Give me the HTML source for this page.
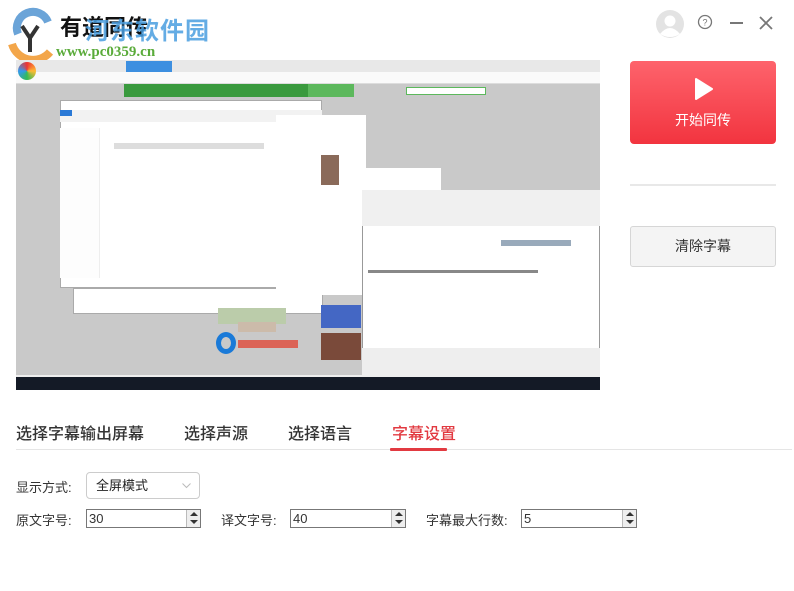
<!DOCTYPE html>
<html><head><meta charset="utf-8"><style>
*{margin:0;padding:0;box-sizing:border-box}
body{width:794px;height:591px;background:#fff;font-family:"Liberation Sans","Noto Sans CJK SC",sans-serif;position:relative;overflow:hidden;color:#333}
.a{position:absolute}
.tab{position:absolute;top:420px;font-size:16px;color:#333;font-weight:500}
.lbl{position:absolute;font-size:13px;color:#333}
.spin{position:absolute;height:19px;border:1px solid #777;background:#fff;font-size:13px;padding-left:2px;line-height:17px}
.spin .b{position:absolute;right:0;top:0;width:14px;height:17px;border-left:1px solid #bbb;background:#eee}
.spin .b:before{content:"";position:absolute;left:3px;top:2px;border:4px solid transparent;border-bottom:4px solid #333;border-top:0}
.spin .b:after{content:"";position:absolute;left:3px;top:10px;border:4px solid transparent;border-top:4px solid #333;border-bottom:0}
</style></head><body>
<svg class="a" style="left:4px;top:4px" width="60" height="58" viewBox="0 0 60 58">
<path d="M14 30 A16 16 0 0 1 44 18" stroke="#6ba4d8" stroke-width="8" fill="none"/>
<path d="M8 40 A22 22 0 0 0 46 48" stroke="#f3a64a" stroke-width="8" fill="none"/>
<path d="M18 22 l8 12 l8-12 M26 34 v14" stroke="#333" stroke-width="4" fill="none"/>
</svg>
<div class="a" style="left:60px;top:10px;font-size:22px;font-weight:bold;color:#111">有道同传</div>
<div class="a" style="left:85px;top:11px;font-size:24px;font-weight:bold;color:#4a9ee0;opacity:.85;letter-spacing:1px">河东软件园</div>
<div class="a" style="left:56px;top:44px;font-size:15px;font-weight:bold;color:#5aab3a;font-family:'Liberation Serif',serif">www.pc0359.cn</div>
<svg class="a" style="left:655px;top:9px" width="30" height="30" viewBox="0 0 30 30"><circle cx="15" cy="15" r="14" fill="#e3e3e3"/><circle cx="15" cy="12" r="5.5" fill="#fff"/><path d="M5 25 Q15 13 25 25 Q15 31 5 25Z" fill="#fff"/></svg>
<svg class="a" style="left:697px;top:14px" width="16" height="16" viewBox="0 0 16 16"><circle cx="8" cy="8" r="6.5" stroke="#777" stroke-width="1.3" fill="none"/><text x="8" y="11.5" font-size="9" text-anchor="middle" fill="#777" font-family="Liberation Sans">?</text></svg>
<div class="a" style="left:730px;top:22px;width:13px;height:2px;background:#777"></div>
<svg class="a" style="left:759px;top:16px" width="14" height="14"><path d="M1 1L13 13M13 1L1 13" stroke="#777" stroke-width="1.8"/></svg>
<div class="a" style="left:16px;top:60px;width:584px;height:330px;background:#c9c9c9;overflow:hidden">
 <div class="a" style="left:0;top:0;width:584px;height:12px;background:#e8e8e8"></div>
 <div class="a" style="left:110px;top:1px;width:46px;height:11px;background:#3d8fe0"></div>
 <div class="a" style="left:0;top:12px;width:584px;height:12px;background:#fafafa;border-bottom:1px solid #ddd"></div>
 <div class="a" style="left:2px;top:2px;width:18px;height:18px;border-radius:50%;background:conic-gradient(#e33,#fb3,#3b5,#39e,#e33)"></div>
 <div class="a" style="left:108px;top:24px;width:230px;height:13px;background:#3a9a3e"></div>
 <div class="a" style="left:292px;top:24px;width:46px;height:13px;background:#5cb85c"></div>
 <div class="a" style="left:390px;top:27px;width:80px;height:8px;background:#fff;border:1px solid #5cb85c"></div>
 <div class="a" style="left:44px;top:40px;width:262px;height:188px;background:#fff;border:1px solid #aaa"></div>
 <div class="a" style="left:44px;top:50px;width:262px;height:12px;background:#f2f2f2"></div>
 <div class="a" style="left:44px;top:50px;width:12px;height:6px;background:#2a79d6"></div>
 <div class="a" style="left:44px;top:68px;width:40px;height:150px;background:#fdfdfd;border-right:1px solid #eee"></div>
 <div class="a" style="left:98px;top:83px;width:150px;height:6px;background:#ddd"></div>
 <div class="a" style="left:57px;top:228px;width:250px;height:26px;background:#fff;border:1px solid #aaa"></div>
 <div class="a" style="left:260px;top:55px;width:90px;height:180px;background:#fff"></div>
 <div class="a" style="left:305px;top:95px;width:18px;height:30px;background:#8a6a5a"></div>
 <div class="a" style="left:330px;top:108px;width:95px;height:30px;background:#fff"></div>
 <div class="a" style="left:202px;top:248px;width:68px;height:16px;background:#bca"></div>
 <div class="a" style="left:222px;top:262px;width:38px;height:10px;background:#cba"></div>
 <div class="a" style="left:305px;top:245px;width:40px;height:23px;background:#4467c4"></div>
 <div class="a" style="left:305px;top:273px;width:40px;height:27px;background:#7a4a3a"></div>
 <div class="a" style="left:200px;top:272px;width:20px;height:22px;border-radius:50%;border:5px solid #1a7ad8"></div>
 <div class="a" style="left:222px;top:280px;width:60px;height:8px;background:#e04a3a;opacity:.8"></div>
 <div class="a" style="left:346px;top:130px;width:238px;height:185px;background:#fff;border:1px solid #999"></div>
 <div class="a" style="left:346px;top:130px;width:238px;height:36px;background:#f0f0f0"></div>
 <div class="a" style="left:346px;top:288px;width:238px;height:27px;background:#eee"></div>
 <div class="a" style="left:485px;top:180px;width:70px;height:6px;background:#9ab"></div>
 <div class="a" style="left:352px;top:210px;width:170px;height:3px;background:#888"></div>
 <div class="a" style="left:0;top:315px;width:584px;height:2px;background:#eee"></div>
 <div class="a" style="left:0;top:317px;width:584px;height:13px;background:#141a26"></div>
</div>
<div class="a" style="left:630px;top:61px;width:146px;height:83px;border-radius:4px;background:linear-gradient(#fe636c,#f2343f)"></div>
<svg class="a" style="left:694px;top:78px" width="20" height="22"><path d="M2 1L18 11L2 21Z" fill="#fff" stroke="#fff" stroke-linejoin="round" stroke-width="2"/></svg>
<div class="a" style="left:630px;top:110px;width:146px;text-align:center;color:#fff;font-size:14px">开始同传</div>
<div class="a" style="left:630px;top:184px;width:146px;height:2px;background:#e8e8e8"></div>
<div class="a" style="left:630px;top:226px;width:146px;height:41px;border:1px solid #d6d6d6;border-radius:3px;background:#f4f4f4;text-align:center;line-height:39px;font-size:14px;color:#333">清除字幕</div>
<div class="tab" style="left:16px">选择字幕输出屏幕</div>
<div class="tab" style="left:184px">选择声源</div>
<div class="tab" style="left:288px">选择语言</div>
<div class="tab" style="left:392px;color:#e23a41">字幕设置</div>
<div class="a" style="left:16px;top:449px;width:776px;height:1px;background:#e5e5e5"></div>
<div class="a" style="left:390px;top:448px;width:57px;height:3px;background:#e23a41;border-radius:1px"></div>
<div class="lbl" style="left:16px;top:477px">显示方式:</div>
<div class="a" style="left:86px;top:472px;width:114px;height:27px;border:1px solid #ccc;border-radius:4px;font-size:13px;line-height:25px;padding-left:9px;color:#222">全屏模式<svg style="position:absolute;right:8px;top:10px" width="9" height="6"><path d="M0.5 0.5L4.5 4.5L8.5 0.5" stroke="#bbb" fill="none"/></svg></div>
<div class="lbl" style="left:16px;top:510px">原文字号:</div>
<div class="spin" style="left:86px;top:509px;width:115px">30<span class="b"></span></div>
<div class="lbl" style="left:221px;top:510px">译文字号:</div>
<div class="spin" style="left:290px;top:509px;width:116px">40<span class="b"></span></div>
<div class="lbl" style="left:426px;top:510px">字幕最大行数:</div>
<div class="spin" style="left:521px;top:509px;width:116px">5<span class="b"></span></div>
</body></html>
